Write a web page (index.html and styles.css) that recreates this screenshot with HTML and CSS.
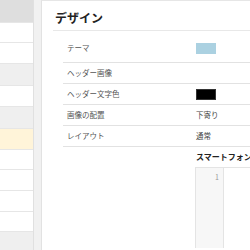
FILE: index.html
```html
<!doctype html>
<html lang="ja">
  <head>
    <meta charset="UTF-8" />
    <title>デザイン</title>
    <link rel="stylesheet" href="styles.css">
  </head>
  <body>
    <div class="side">
      <div class="side-row head r1"></div>
      <div class="side-row r2"></div>
      <div class="side-row r3"></div>
      <div class="side-row section r4"></div>
      <div class="side-row r5"></div>
      <div class="side-row section r6"></div>
      <div class="side-row active r7"></div>
      <div class="side-row r8"></div>
      <div class="side-row r9"></div>
      <div class="side-row r10"></div>
      <div class="side-row r11"></div>
      <div class="side-row section r12"></div>
    </div>

    <div class="panel">
      <h2 class="title">デザイン</h2>
      <table class="settings">
        <colgroup>
          <col class="col-label">
          <col>
        </colgroup>
        <tr class="row-theme">
          <th>テーマ</th>
          <td><span class="swatch swatch-blue"></span></td>
        </tr>
        <tr>
          <th>ヘッダー画像</th>
          <td></td>
        </tr>
        <tr>
          <th>ヘッダー文字色</th>
          <td><span class="swatch swatch-black"></span></td>
        </tr>
        <tr>
          <th>画像の配置</th>
          <td>下寄り</td>
        </tr>
        <tr>
          <th>レイアウト</th>
          <td>通常</td>
        </tr>
        <tr class="row-css">
          <th></th>
          <td>
            <div class="sub-title">スマートフォン用CSS</div>
            <div class="editor">
              <div class="gutter">1</div>
              <div class="code"></div>
            </div>
          </td>
        </tr>
      </table>
    </div>
  </body>
</html>
```

FILE: styles.css
```css
html,
body {
  margin: 0;
  height: 250px;
  overflow: hidden;
}

body {
  display: flex;
  background-color: #f1f1f1;
  font-family: "Noto Sans CJK JP", "Noto Sans", sans-serif;
  color: #444;
}

/* --- 左のリスト --- */
.side {
  width: 33px;
  flex-shrink: 0;
  border-right: 1px solid #e0e0e0;
  background-color: #fff;
}

.side-row {
  box-sizing: border-box;
  border-bottom: 1px solid #e6e6e6;
}

.side-row.head {
  background-color: #dedede;
}

.side-row.section {
  background-color: #efefef;
}

.side-row.active {
  background-color: #fff4d9;
}

.r1 { height: 23px; }
.r2 { height: 20px; }
.r3 { height: 21px; }
.r4 { height: 22px; }
.r5 { height: 21px; }
.r6 { height: 22px; }
.r7 { height: 21px; }
.r8 { height: 20px; }
.r9 { height: 21px; }
.r10 { height: 21px; }
.r11 { height: 20px; }
.r12 { height: 18px; border-bottom: none; }

/* --- 右のパネル --- */
.panel {
  flex: 1;
  min-width: 0;
  height: 249px;
  margin-left: 7px;
  padding: 0 0 0 11px;
  background-color: #fff;
  border-left: 1px solid #e2e2e2;
  border-top: 1px solid #e6e6e6;
  overflow: hidden;
  white-space: nowrap;
}

.title {
  margin: 9px 0 0 0;
  padding: 0 0 4px 2px;
  font-size: 12px;
  line-height: 16px;
  font-weight: bold;
  color: #222;
  border-bottom: 1px solid #e8e8e8;
}

.settings {
  margin-left: 10px;
  width: 260px;
  table-layout: fixed;
  border-collapse: collapse;
  font-size: 7.5px;
}

.col-label {
  width: 132px;
}

.settings th,
.settings td {
  height: 20px;
  padding: 0;
  border-bottom: 1px solid #e2e2e2;
  vertical-align: middle;
  text-align: left;
  font-weight: normal;
  overflow: hidden;
}

.settings th {
  padding-left: 4px;
  color: #555;
}

.settings td {
  padding-left: 1px;
  color: #444;
}

.row-theme th,
.row-theme td {
  height: 31px;
  padding-top: 3px;
  box-sizing: border-box;
}

.swatch {
  display: inline-block;
  width: 20px;
  height: 11px;
  vertical-align: middle;
}

.swatch-blue {
  background-color: #abd1e1;
}

.swatch-black {
  background-color: #000;
  border: 1px solid #333;
  box-sizing: border-box;
}

.row-css th,
.row-css td {
  border-bottom: none;
  vertical-align: top;
}

.sub-title {
  margin-top: 4px;
  font-size: 8px;
  line-height: 12px;
  font-weight: bold;
  color: #222;
}

.editor {
  display: flex;
  margin: 4px 0 0 -1px;
  height: 80px;
  border: 1px solid #e4e4e4;
  border-bottom: none;
}

.gutter {
  width: 28px;
  padding: 4px 4px 0 0;
  box-sizing: border-box;
  background-color: #f7f7f7;
  border-right: 1px solid #e4e4e4;
  text-align: right;
  font-size: 7px;
  line-height: 10px;
  color: #999;
}

.code {
  flex: 1;
}
```
